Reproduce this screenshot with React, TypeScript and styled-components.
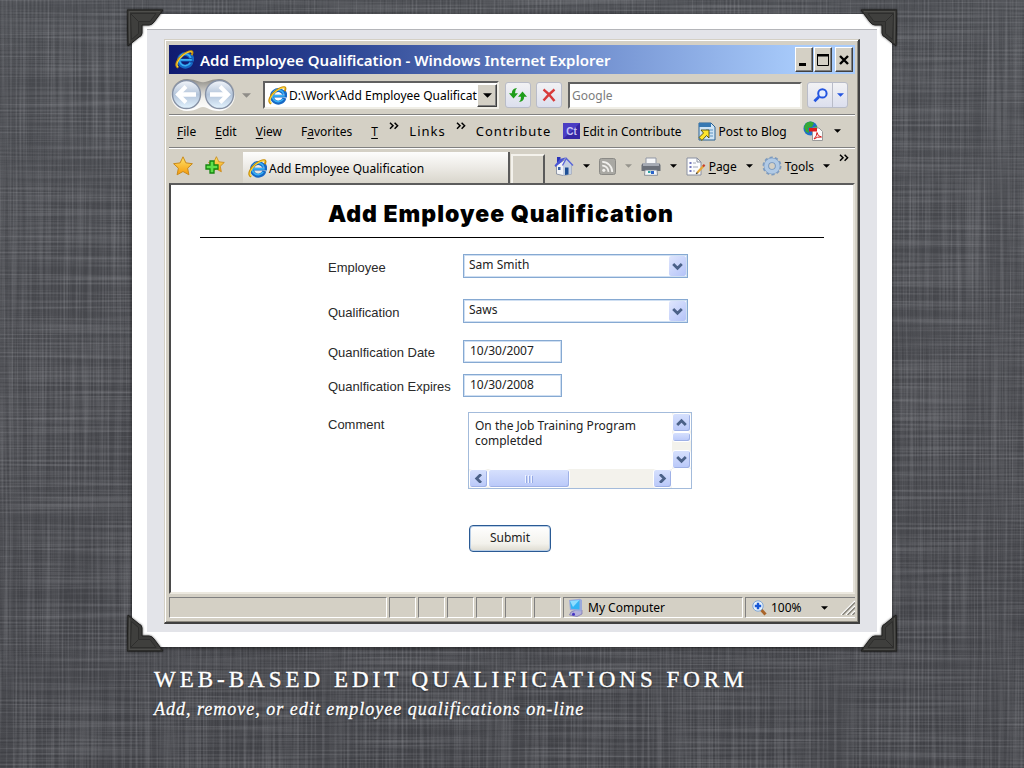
import React from 'react';
import styled, { createGlobalStyle, css } from 'styled-components';

const UI = '"Noto Sans", "Open Sans", sans-serif';
const FACE = '#d4d0c5';

const GlobalStyle = createGlobalStyle`
  * { box-sizing: border-box; }
  body { margin: 0; background: #494a4f; font-family: ${UI}; font-size: 12px; color: #000; }
  button, input, select, textarea { font: inherit; color: inherit; margin: 0; border-radius: 0; outline: 0; }
  button { cursor: pointer; padding: 0; }
  svg { display: block; flex: none; }
`;

const sunken = css`
  border: 1px solid;
  border-color: #808080 #fff #fff #808080;
`;
const raised = css`
  border: 1px solid;
  border-color: #fff #404040 #404040 #fff;
  box-shadow: inset -1px -1px 0 #808080;
`;

/* ---------- Slide ---------- */

const Slide = styled.main`
  position: relative;
  min-height: 100vh;
  padding: 14px 132px 40px;
  isolation: isolate;
  overflow: hidden;
`;
const Linen = styled.svg`
  position: absolute;
  inset: 0;
  z-index: -1;
  width: 100%;
  height: 100%;
`;
const Frame = styled.figure`
  position: relative;
  margin: 0;
  padding: 15px;
  background: #fff;
  box-shadow: 0 1px 4px rgba(0, 0, 0, 0.6);
`;
const Mat = styled.div`
  padding: 9px 17px 8px;
  background: #e3e4e9;
  border-top: 1px solid #b4b5b9;
`;
const Corner = styled.svg<{ $v: 'top' | 'bottom'; $h: 'left' | 'right' }>`
  position: absolute;
  ${p => p.$v}: -5px;
  ${p => p.$h}: -5px;
  transform: scale(${p => (p.$h === 'left' ? 1 : -1)}, ${p => (p.$v === 'top' ? 1 : -1)});
  filter: drop-shadow(0 0 1px rgba(0, 0, 0, 0.7));
`;
const Caption = styled.section`
  padding: 19px 22px 0;
  font-family: "Liberation Serif", serif;
  color: #fff;
  text-shadow: 0 1px 2px rgba(0, 0, 0, 0.6);
`;
const CaptionTitle = styled.h1`
  margin: 0;
  font-size: 23px;
  line-height: 28px;
  font-weight: 400;
  letter-spacing: 4px;
  text-transform: uppercase;
  -webkit-text-stroke: 0.4px #fff;
`;
const CaptionText = styled.p`
  margin: 3px 0 0;
  font-size: 18px;
  line-height: 24px;
  font-style: italic;
  letter-spacing: 1px;
  -webkit-text-stroke: 0.3px #fff;
`;

/* ---------- Window chrome ---------- */

const Window = styled.div`
  padding: 5px 3px 4px 4px;
  background: ${FACE};
  border-style: solid;
  border-width: 1px 2px 2px 1px;
  border-color: #d4d0c5 #404040 #404040 #d4d0c5;
  box-shadow: inset 1px 1px 0 #fff, inset -1px -1px 0 #8c897f;
`;
const TitleBar = styled.header`
  display: flex;
  align-items: center;
  height: 29px;
  padding: 0 2px 0 6px;
  gap: 6px;
  color: #fff;
  background: linear-gradient(90deg, #0f1a70 0%, #2c4593 25%, #7391d0 62%, #a8cbfb 92%);
`;
const WindowTitle = styled.h2`
  flex: 1;
  margin: 0;
  font-size: 15px;
  line-height: 20px;
  font-weight: 600;
`;
const WindowButtons = styled.div`
  display: flex;
  gap: 1px;
`;
const WindowButton = styled.button<{ $apart?: boolean }>`
  display: grid;
  place-items: center;
  width: 18px;
  height: 25px;
  margin-left: ${p => (p.$apart ? 2 : 0)}px;
  background: ${FACE};
  ${raised}
`;
const Bar = styled.div<{ $h: number }>`
  display: flex;
  align-items: center;
  height: ${p => p.$h}px;
  border-bottom: 1px solid #808080;
  box-shadow: 0 1px 0 #fff;
`;
const AddressBar = styled(Bar)`
  padding: 2px 7px 0 1px;
`;
const Plain = styled.button`
  display: flex;
  align-items: center;
  gap: 3px;
  background: none;
  border: 0;
  white-space: nowrap;
`;
const HistoryButton = styled(Plain)`
  margin: 0 12px 0 6px;
`;
const Address = styled.div`
  display: flex;
  align-items: center;
  width: 236px;
  height: 28px;
  padding-left: 3px;
  margin-right: 6px;
  background: #fff;
  border: 2px solid;
  border-color: #606060 #f0eee6 #f0eee6 #606060;
`;
const AddressInput = styled.input`
  flex: 1;
  min-width: 0;
  height: 22px;
  padding: 0 0 0 2px;
  background: none;
  border: 0;
`;
const DropButton = styled.button`
  display: grid;
  place-items: center;
  width: 20px;
  height: 23px;
  background: ${FACE};
  ${raised}
`;
const SoftButton = styled.button`
  display: grid;
  place-items: center;
  width: 26px;
  height: 26px;
  margin-right: 5px;
  border: 1px solid #b9bcc8;
  border-radius: 3px;
  background: linear-gradient(#f2f2f4, #dcdfee);
`;
const SearchInput = styled.input`
  flex: 1;
  min-width: 0;
  height: 27px;
  padding: 0 2px;
  margin: 0 5px 0 1px;
  background: #fff;
  border: 2px solid;
  border-color: #606060 #f0eee6 #f0eee6 #606060;
  &::placeholder { color: #7c7c7c; opacity: 1; }
`;
const SearchButtons = styled.div`
  display: flex;
  height: 26px;
  border: 1px solid #b9bcc8;
  border-radius: 3px;
  background: linear-gradient(#f2f2f4, #dcdfee);
  button { display: grid; place-items: center; border: 0; background: none; }
  button:first-child { width: 25px; border-right: 1px solid #b9bcc8; }
  button:last-child { width: 14px; }
`;
const MenuBar = styled(Bar)`
  padding: 0 14px 0 8px;
  justify-content: space-between;
`;
const MenuGroup = styled.div<{ $gap: number }>`
  display: flex;
  align-items: center;
  gap: ${p => p.$gap}px;
`;
const Accel = styled.u`
  text-underline-offset: 2px;
`;
const BarLabel = styled.span`
  font-size: 13px;
  letter-spacing: 1px;
`;
const More = styled(Plain)`
  align-self: flex-start;
`;
const TabBar = styled.div`
  display: flex;
  align-items: flex-end;
  height: 35px;
  padding: 1px 6px 0 4px;
`;
const TabTools = styled.div`
  display: flex;
  align-items: center;
  align-self: center;
  gap: 12px;
  margin-right: 18px;
`;
const Tab = styled.button`
  display: flex;
  flex: 1;
  align-items: center;
  gap: 2px;
  height: 31px;
  padding: 2px 5px 0;
  background: linear-gradient(#fdfdfc, #eceae5 50%, #d9d6cc);
  border: 0;
  border-right: 2px solid #5a5a5a;
  white-space: nowrap;
`;
const NewTab = styled.button`
  width: 34px;
  height: 29px;
  margin-left: 1px;
  background: ${FACE};
  border: solid;
  border-width: 2px 2px 0 2px;
  border-color: #f4f2ec #5a5a5a #5a5a5a #f4f2ec;
`;
const Commands = styled.div`
  display: flex;
  align-items: center;
  align-self: stretch;
  gap: 9px;
  margin-left: 9px;
`;
const MoreCommands = styled(More)`
  padding-top: 5px;
`;

/* ---------- Page inside the browser ---------- */

const Page = styled.div`
  padding: 15px 29px 40px;
  background: #fff;
  border: solid;
  border-width: 2px 2px 2px 2px;
  border-color: #5c5c5c #e4e1d8 #ece9e0 #4a4a4a;
`;
const PageTitle = styled.h3`
  margin: 0;
  padding: 0 22px 8px 0;
  border-bottom: 1px solid #000;
  font: 900 23px/29px Inter, sans-serif;
  letter-spacing: 1px;
  text-align: center;
`;
const Form = styled.form`
  padding: 16px 0 0 128px;
`;
const Row = styled.div<{ $after: number; $top?: boolean }>`
  display: flex;
  align-items: ${p => (p.$top ? 'flex-start' : 'center')};
  margin-bottom: ${p => p.$after}px;
`;
const Label = styled.label`
  width: 135px;
  padding-top: 3px;
  font: 13px/20px "Liberation Sans", Arial, sans-serif;
  color: #2a2a2a;
`;
const fieldBorder = css`
  border: 1px solid #86a9d2;
  box-shadow: inset 0 0 0 1px #cfdff2;
`;
const SelectBox = styled.div`
  position: relative;
  width: 225px;
`;
const Select = styled.select`
  appearance: none;
  display: block;
  width: 100%;
  height: 24px;
  padding: 0 24px 3px 5px;
  background: #fff;
  color: #222;
  ${fieldBorder}
`;
const SelectArrow = styled.span`
  position: absolute;
  top: 2px;
  right: 2px;
  bottom: 2px;
  display: grid;
  place-items: center;
  width: 17px;
  border-radius: 2px;
  background: linear-gradient(135deg, #dfe6fd, #b4c3f8);
  pointer-events: none;
`;
const TextInput = styled.input`
  width: 99px;
  height: 23px;
  padding: 0 5px 2px 6px;
  background: #fff;
  color: #222;
  ${fieldBorder}
`;
const Indent = styled.div`
  padding-left: 5px;
`;
const CommentBox = styled.div`
  display: grid;
  grid-template: 56px 19px / 1fr 19px;
  width: 224px;
  background: #fff;
  border: 1px solid #a3bbdb;
`;
const CommentInput = styled.textarea`
  display: block;
  width: 100%;
  height: 100%;
  padding: 5px 6px 0;
  border: 0;
  resize: none;
  overflow: hidden;
  background: none;
  line-height: 15px;
  color: #222;
`;
const Track = styled.div<{ $vertical?: boolean }>`
  display: flex;
  flex-direction: ${p => (p.$vertical ? 'column' : 'row')};
  background: #f3f2ec;
`;
const scrollPart = css`
  display: grid;
  place-items: center;
  border: 1px solid #fff;
  border-radius: 3px;
  background: linear-gradient(#d6e0fd, #b9c8f9);
  box-shadow: inset -1px -1px 0 #9fb1e6;
`;
const ScrollButton = styled.button`
  width: 19px;
  height: 19px;
  flex: none;
  ${scrollPart}
`;
const ThumbX = styled.div`
  width: 82px;
  margin-right: auto;
  ${scrollPart}
`;
const ThumbY = styled.div`
  height: 10px;
  margin-bottom: auto;
  ${scrollPart}
`;
const Submit = styled.button`
  display: block;
  width: 82px;
  height: 27px;
  margin-left: 136px;
  padding-bottom: 2px;
  border: 1px solid #2a5a94;
  border-radius: 4px;
  background: linear-gradient(#fff, #f3f2ec 70%, #dedbd0);
  box-shadow: inset 0 0 0 1px #b9cee6;
  color: #222;
`;

/* ---------- Status bar ---------- */

const StatusBar = styled.footer`
  display: flex;
  gap: 2px;
  padding-top: 3px;
`;
const Cell = styled.div<{ $w?: number }>`
  display: flex;
  align-items: center;
  gap: 4px;
  height: 21px;
  padding-left: 4px;
  ${p => (p.$w ? `width: ${p.$w}px;` : 'flex: 1;')}
  ${sunken}
`;
const ZoomCell = styled(Cell)`
  padding-left: 6px;
  border-right: 0;
`;
const ZoomValue = styled.span`
  flex: 1;
`;
const ZoomMenu = styled(Plain)`
  margin-right: 8px;
`;

/* ---------- Icons ---------- */

const IE = ({ size = 20 }: { size?: number }) => (
  <svg width={size} height={size} viewBox="0 0 20 20" fill="none">
    <path d="M17.2 12.6A6.6 6.6 0 1 1 17 8.6" stroke="#1668c4" strokeWidth="4.2" />
    <path d="M5 10.6H18.8Q19 7 17 5.4" stroke="#1668c4" strokeWidth="2.8" />
    <path d="M16 13.6A6.2 6.2 0 1 1 16.6 8.4M5.6 10.4H17.6" stroke="#39b0f4" strokeWidth="1.8" />
    <path d="M3.4 18.6C-1.2 17 2.4 9.4 8.6 4.8 13 1.6 17.8 0 18.4 2.4 18.6 3.4 18 4.6 17.4 5.4" stroke="#c98f08" strokeWidth="2" />
    <path d="M3.6 18C0 16.4 3.4 9.6 9 5.2 13 2.2 17.2 0.8 17.9 2.6" stroke="#ffd93a" strokeWidth="1.1" />
  </svg>
);

const Caret = ({ color = '#000', w = 7 }: { color?: string; w?: number }) => (
  <svg width={w} height={(w + 1) / 2} viewBox="0 0 8 4"><path d="M0 0H8L4 4Z" fill={color} /></svg>
);

const Chevrons = () => (
  <svg width="10" height="8" viewBox="0 0 10 8" fill="none" stroke="#000" strokeWidth="1.5">
    <path d="M1 .8 4 3.8 1 6.8M5.6 .8 8.6 3.8 5.6 6.8" />
  </svg>
);

const Angle = ({ turn = 0 }: { turn?: number }) => (
  <svg width="11" height="9" viewBox="0 0 11 9" fill="none" stroke="#4b6188" strokeWidth="2.8">
    <path d="M1.2 2 5.5 6.3 9.8 2" transform={`rotate(${turn} 5.5 4.5)`} />
  </svg>
);

const NavButtons = () => (
  <svg width="66" height="36" viewBox="0 0 66 36">
    <defs>
      <linearGradient id="orb" x1="0" y1="0" x2="0" y2="1">
        <stop offset="0" stopColor="#f3f6fa" /><stop offset=".5" stopColor="#b3c4da" /><stop offset="1" stopColor="#e4f4ff" />
      </linearGradient>
      <linearGradient id="rim" x1="0" y1="0" x2="0" y2="1">
        <stop offset="0" stopColor="#8d8b85" /><stop offset=".6" stopColor="#f2f1ed" /><stop offset="1" stopColor="#fff" />
      </linearGradient>
    </defs>
    <path d="M17 2Q24 2 29 4.5 33 6 37 4.5 42 2 49 2A16 16 0 0 1 49 34Q42 34 37 31 33 29 29 31 24 34 17 34A16 16 0 0 1 17 2Z" fill="url(#rim)" />
    <circle cx="16.5" cy="17.5" r="14" fill="url(#orb)" stroke="#8792a5" strokeWidth="1.4" />
    <circle cx="49.5" cy="17.5" r="14" fill="url(#orb)" stroke="#8792a5" strokeWidth="1.4" />
    <path d="M16 9.500 8 17.500 16 25.500" fill="none" stroke="#fff" strokeWidth="4" />
    <path d="M9 17.500H26M57 17.500H40" stroke="#fff" strokeWidth="4.500" />
    <path d="M50 9.500 58 17.500 50 25.500" fill="none" stroke="#fff" strokeWidth="4" />
  </svg>
);

const Refresh = () => (
  <svg width="18" height="18" viewBox="0 0 18 18" fill="#1f9d1a">
    <path d="M4.5 12.6 0 7.2H2.8Q3 2.4 8 2 5.8 4 6 7.2H9Z" />
    <path d="M13.5 5.4 18 10.8H15.2Q15 15.6 10 16 12.2 14 12 10.8H9Z" />
  </svg>
);

const Stop = () => (
  <svg width="14" height="14" viewBox="0 0 14 14" fill="none" stroke="#d83a3a" strokeWidth="2.4">
    <path d="M1.5 1.5Q7 5.5 12.5 13M12.5 1.5Q6.5 6.5 1.5 12.5" />
  </svg>
);

const Magnifier = () => (
  <svg width="15" height="15" viewBox="0 0 15 15" fill="none" stroke="#2455e0">
    <circle cx="9.4" cy="5.4" r="4.2" strokeWidth="2" fill="#e6eefe" />
    <path d="M6 8.8 1.4 13.2" strokeWidth="2.8" />
  </svg>
);

const STAR = 'M10 .8 12.9 6.9 19.4 7.7 14.6 12.2 15.9 18.8 10 15.5 4.1 18.8 5.4 12.2 .6 7.7 7.1 6.9Z';
const Star = () => (
  <svg width="20" height="20" viewBox="0 0 20 20">
    <defs><linearGradient id="gold" x1="0" y1="0" x2="0" y2="1"><stop offset="0" stopColor="#ffe46a" /><stop offset="1" stopColor="#f59a0c" /></linearGradient></defs>
    <path d={STAR} fill="url(#gold)" stroke="#c98a1c" />
  </svg>
);
const AddStar = () => (
  <svg width="20" height="20" viewBox="0 0 20 20">
    <path d={STAR} transform="translate(3 0) scale(.84)" fill="url(#gold)" stroke="#c98a1c" />
    <path d="M5 5H9V9H13V13H9V17H5V13H1V9H5Z" fill="#5fe04a" stroke="#15850f" strokeWidth="1.300" />
  </svg>
);

const ContributeIcon = () => (
  <svg width="17" height="16" viewBox="0 0 17 16">
    <rect width="17" height="16" fill="#3626a4" /><path d="M0 0H17L0 16Z" fill="#4b3dc4" />
    <text x="8.5" y="11.5" textAnchor="middle" fontFamily="Liberation Sans, sans-serif" fontSize="10" fontWeight="700" fill="#c6c2f6">Ct</text>
  </svg>
);

const BlogIcon = () => (
  <svg width="18" height="19" viewBox="0 0 18 19">
    <path d="M1 1H13L17 5V18H1Z" fill="#cfe4f5" stroke="#2a6294" /><path d="M1 1H13V5H1Z" fill="#3678b2" />
    <path d="M8 8H15M11 11H15M12 14H15" stroke="#5c93c1" />
    <path d="M11 8V16L8.500 13.500 4 18.400 1 15.500 5.500 11 3 8Z" fill="#ffe52c" stroke="#4f4a10" strokeWidth=".9" />
  </svg>
);

const GlobePdf = () => (
  <svg width="20" height="20" viewBox="0 0 20 20">
    <circle cx="7.500" cy="7.500" r="7" fill="#1f6fca" /><path d="M3 2Q8-1 11 2L9 6 5 7 6 12 3 11 1 6ZM11 6 14 5 14 9 11 10Z" fill="#35a936" />
    <path d="M9.500 7H16L19.500 10.500V19.500H9.500Z" fill="#fbfbfb" stroke="#9a9a9a" />
    <path d="M6 7H14V10.500H6Z" fill="#e01b1b" />
    <path d="M11 18Q14 15 14 11.500 14.500 15.500 18.500 16 14 15.500 11 18Z" fill="none" stroke="#d81f1f" />
  </svg>
);

const Home = () => (
  <svg width="20" height="20" viewBox="0 0 20 20">
    <path d="M3 1H6.500V7L3 9Z" fill="#2b33b8" />
    <path d="M2.500 9V18L9 19.500 17.500 18V8L12 3Z" fill="#f2f4f8" stroke="#7d879a" strokeWidth=".8" />
    <path d="M9 9.500V19.500L17.500 18V8L12.500 3Z" fill="#c5d0e2" />
    <path d="M.5 9.500 6 3 12 1.200 7.500 6 1.500 11Z" fill="#4a56d4" />
    <path d="M8.500 9.500 12.300 2.500 19 9.500" fill="none" stroke="#5a66d8" strokeWidth="1.400" />
    <path d="M4 11H6.500V14H4Z" fill="#395fa8" /><path d="M11 11.500H14.500V18.400L11 19Z" fill="#1e4f95" />
  </svg>
);

const Feed = () => (
  <svg width="17" height="17" viewBox="0 0 17 17" fill="none">
    <rect x=".5" y=".5" width="16" height="16" rx="2" fill="#a9a8a3" stroke="#8b8a86" />
    <circle cx="4.800" cy="12.300" r="1.600" fill="#f1f0ed" />
    <path d="M3.200 7.600A6 6 0 0 1 9.400 13.900M3.200 3.900A9.800 9.800 0 0 1 13.200 13.900" stroke="#f1f0ed" strokeWidth="1.800" />
  </svg>
);

const Printer = () => (
  <svg width="20" height="19" viewBox="0 0 20 19">
    <path d="M5 1H15V8H5Z" fill="#f6f7f9" stroke="#9197a3" />
    <path d="M2 6H18L19.500 8V14H.5V8Z" fill="#6b7079" /><path d="M2 6H18V9H2Z" fill="#a6abb4" />
    <path d="M4 13H16L16.500 18.300H3.500Z" fill="#f3f6f9" stroke="#777d88" strokeWidth=".8" />
    <path d="M7 14H9.500V16H7Z" fill="#2aa5a0" /><path d="M10 14H13V17H10Z" fill="#2b63c9" />
  </svg>
);

const PageIcon = () => (
  <svg width="20" height="19" viewBox="0 0 20 19">
    <path d="M1 1H11L15 5V18H1Z" fill="#fbfcfe" stroke="#8a90a0" /><path d="M11 1V5H15" fill="none" stroke="#8a90a0" />
    <path d="M3.500 6H5.500M3.500 10H5.500M3.500 14H5.500" stroke="#7377bd" strokeWidth="1.800" /><path d="M7 6H10M7 10H12M7 14H9" stroke="#a4a8b8" />
    <path d="M11 16 17.500 9" stroke="#e5a83a" strokeWidth="2.200" /><path d="M17 9.500 18.600 7.800" stroke="#c8402f" strokeWidth="2.200" /><path d="M10.200 16.900 11.400 15.600" stroke="#333" strokeWidth="1.400" />
  </svg>
);

const Gear = () => (
  <svg width="20" height="20" viewBox="0 0 20 20" fill="none">
    <circle cx="10" cy="10" r="7.800" stroke="#7f9cbf" strokeWidth="3.400" strokeDasharray="2.900 2" />
    <circle cx="10" cy="10" r="5.600" stroke="#7594ba" strokeWidth="5.400" /><circle cx="10" cy="10" r="5.800" stroke="#b1cae5" strokeWidth="4" />
  </svg>
);

const Computer = () => (
  <svg width="16" height="19" viewBox="0 0 16 19">
    <path d="M8 12H14L14 16 9 18.500 1.500 17 3 14Z" fill="#b4b1dc" stroke="#7370ac" strokeWidth=".7" />
    <path d="M1 2 12 .8 14 2V12L12.500 13.500 2 12Z" fill="#9ba8da" /><path d="M2 3 11.500 2V11.500L3 10.800Z" fill="#32b4f5" /><path d="M2 3 11.500 2 5 9Z" fill="#8fdcff" />
    <circle cx="5.500" cy="16.200" r="1.500" fill="#4534c4" />
  </svg>
);

const ZoomIcon = () => (
  <svg width="15" height="16" viewBox="0 0 15 16" fill="none">
    <path d="M9 9.500 13.500 14.500" stroke="#a8642a" strokeWidth="3" />
    <circle cx="6" cy="6" r="5.200" fill="#e8f3fd" stroke="#7fa6d6" />
    <path d="M6 2.800V9.200M2.800 6H9.200" stroke="#1757d6" strokeWidth="2.400" />
  </svg>
);

const Grip = () => (
  <svg width="15" height="15" viewBox="0 0 15 15" fill="none">
    <path d="M1 15 15 1M6 15 15 6M11 15 15 11" stroke="#fff" strokeWidth="1.400" />
    <path d="M2.500 15 15 2.500M7.500 15 15 7.500M12.500 15 15 12.500" stroke="#85827a" strokeWidth="1.400" />
  </svg>
);

const PhotoCorner = ({ v, h }: { v: 'top' | 'bottom'; h: 'left' | 'right' }) => (
  <Corner $v={v} $h={h} width="37" height="38" viewBox="0 0 37 38">
    <path d="M0 1H36L27 13Q25 16 22 16H15V24Q15 27 12 28L1 37Z" fill="#3a3a38" stroke="#20201f" />
    <path d="M3.500 4.500H29L23 12.500H11.500V24.500L4.500 30.500Z" fill="#3f3f3d" stroke="#2b2b2a" strokeWidth=".8" />
    <path d="M2 2.600H33M2.400 3V34" stroke="#575754" strokeWidth=".8" />
    <path d="M4 5 11 12" stroke="#2e2e2d" />
  </Corner>
);

/* Woven cloth: one noise layer per thread direction, plus sparse bright threads. */
const THREAD = '0 0 0 0 .72  0 0 0 0 .73  0 0 0 0 .77';
const Texture = () => (
  <Linen aria-hidden="true">
    <defs>
      <filter id="weft" x="0" y="0" width="100%" height="100%">
        <feTurbulence type="fractalNoise" baseFrequency="0.006 0.5" numOctaves="2" seed="4" />
        <feColorMatrix values={`${THREAD}  1.600 0 0 0 -.6`} />
      </filter>
      <filter id="warp" x="0" y="0" width="100%" height="100%">
        <feTurbulence type="fractalNoise" baseFrequency="0.5 0.006" numOctaves="2" seed="9" />
        <feColorMatrix values={`${THREAD}  1.600 0 0 0 -.6`} />
      </filter>
      <linearGradient id="shade" x1="0" y1="0" x2="0" y2="1">
        <stop offset="0" stopColor="#484a4f" /><stop offset=".5" stopColor="#45464b" /><stop offset="1" stopColor="#404146" />
      </linearGradient>
    </defs>
    <rect width="100%" height="100%" fill="url(#shade)" />
    <rect width="100%" height="100%" filter="url(#weft)" opacity=".24" />
    <rect width="100%" height="100%" filter="url(#warp)" opacity=".24" />
  </Linen>
);

/* ---------- Screen ---------- */

export default function App() {
  return (
    <Slide>
      <GlobalStyle />
      <Texture />
      <Frame>
        <Mat>
          <Window>
            <TitleBar>
              <IE size={19} />
              <WindowTitle>Add Employee Qualification - Windows Internet Explorer</WindowTitle>
              <WindowButtons>
                <WindowButton aria-label="Minimize"><svg width="10" height="12"><path d="M0 9H7V12H0Z" /></svg></WindowButton>
                <WindowButton aria-label="Maximize"><svg width="12" height="12"><path d="M.5 1.500H11.500V11.500H.5Z" fill="none" stroke="#000" /><path d="M0 0H12V2.500H0Z" /></svg></WindowButton>
                <WindowButton aria-label="Close" $apart><svg width="10" height="10"><path d="M1 1 9 9M9 1 1 9" stroke="#000" strokeWidth="2.400" /></svg></WindowButton>
              </WindowButtons>
            </TitleBar>

            <AddressBar $h={41}>
              <Plain aria-label="Back and forward"><NavButtons /></Plain>
              <HistoryButton aria-label="Recent pages"><Caret color="#8f8d88" w={9} /></HistoryButton>
              <Address>
                <IE size={19} />
                <AddressInput aria-label="Address" defaultValue="D:\Work\Add Employee Qualification" />
                <DropButton aria-label="Show address list"><Caret w={9} /></DropButton>
              </Address>
              <SoftButton aria-label="Refresh"><Refresh /></SoftButton>
              <SoftButton aria-label="Stop"><Stop /></SoftButton>
              <SearchInput aria-label="Search" placeholder="Google" />
              <SearchButtons>
                <button aria-label="Search"><Magnifier /></button>
                <button aria-label="Search options"><Caret color="#2455e0" /></button>
              </SearchButtons>
            </AddressBar>

            <MenuBar $h={33}>
              <MenuGroup $gap={19}>
                <Plain><span><Accel>F</Accel>ile</span></Plain>
                <Plain><span><Accel>E</Accel>dit</span></Plain>
                <Plain><span><Accel>V</Accel>iew</span></Plain>
                <Plain><span>F<Accel>a</Accel>vorites</span></Plain>
                <Plain><Accel>T</Accel></Plain>
              </MenuGroup>
              <MenuGroup $gap={10}>
                <More aria-label="More menus"><Chevrons /></More>
                <BarLabel>Links</BarLabel>
                <More aria-label="More links"><Chevrons /></More>
                <BarLabel>Contribute</BarLabel>
              </MenuGroup>
              <MenuGroup $gap={16}>
                <Plain><ContributeIcon />Edit in Contribute</Plain>
                <Plain><BlogIcon />Post to Blog</Plain>
                <Plain aria-label="Convert to PDF"><GlobePdf /></Plain>
              </MenuGroup>
              <Plain aria-label="PDF options"><Caret /></Plain>
            </MenuBar>

            <TabBar>
              <TabTools>
                <Plain aria-label="Favorites center"><Star /></Plain>
                <Plain aria-label="Add to favorites"><AddStar /></Plain>
              </TabTools>
              <Tab><IE size={19} />Add Employee Qualification</Tab>
              <NewTab aria-label="New tab" />
              <Commands>
                <Plain aria-label="Home"><Home /></Plain>
                <Plain aria-label="Home options"><Caret /></Plain>
                <Plain aria-label="Feeds"><Feed /></Plain>
                <Plain aria-label="Feed options"><Caret color="#96948d" /></Plain>
                <Plain aria-label="Print"><Printer /></Plain>
                <Plain aria-label="Print options"><Caret /></Plain>
                <Plain><PageIcon /><span><Accel>P</Accel>age</span></Plain>
                <Plain aria-label="Page options"><Caret /></Plain>
                <Plain><Gear /><span>T<Accel>o</Accel>ols</span></Plain>
                <Plain aria-label="Tools options"><Caret /></Plain>
                <MoreCommands aria-label="More commands"><Chevrons /></MoreCommands>
              </Commands>
            </TabBar>

            <Page>
              <PageTitle>Add Employee Qualification</PageTitle>
              <Form onSubmit={e => e.preventDefault()}>
                <Row $after={21}>
                  <Label htmlFor="employee">Employee</Label>
                  <SelectBox>
                    <Select id="employee"><option>Sam Smith</option></Select>
                    <SelectArrow><Angle /></SelectArrow>
                  </SelectBox>
                </Row>
                <Row $after={17}>
                  <Label htmlFor="qualification">Qualification</Label>
                  <SelectBox>
                    <Select id="qualification"><option>Saws</option></Select>
                    <SelectArrow><Angle /></SelectArrow>
                  </SelectBox>
                </Row>
                <Row $after={11}>
                  <Label htmlFor="date">Quanlfication Date</Label>
                  <TextInput id="date" defaultValue="10/30/2007" />
                </Row>
                <Row $after={15}>
                  <Label htmlFor="expires">Quanlfication Expires</Label>
                  <TextInput id="expires" defaultValue="10/30/2008" />
                </Row>
                <Row $after={36} $top>
                  <Label htmlFor="comment">Comment</Label>
                  <Indent>
                    <CommentBox>
                      <CommentInput id="comment" defaultValue={'On the Job Training Program\ncompletded'} />
                      <Track $vertical>
                        <ScrollButton type="button" aria-label="Scroll up"><Angle turn={180} /></ScrollButton>
                        <ThumbY />
                        <ScrollButton type="button" aria-label="Scroll down"><Angle /></ScrollButton>
                      </Track>
                      <Track>
                        <ScrollButton type="button" aria-label="Scroll left"><Angle turn={90} /></ScrollButton>
                        <ThumbX><svg width="9" height="8"><path d="M.5 0V8M3.500 0V8M6.500 0V8" stroke="#eef3ff" /><path d="M1.500 1V8M4.500 1V8M7.500 1V8" stroke="#96aae4" /></svg></ThumbX>
                        <ScrollButton type="button" aria-label="Scroll right"><Angle turn={-90} /></ScrollButton>
                      </Track>
                    </CommentBox>
                  </Indent>
                </Row>
                <Indent><Submit type="submit">Submit</Submit></Indent>
              </Form>
            </Page>

            <StatusBar>
              <Cell />
              {[1, 2, 3, 4, 5, 6].map(n => <Cell key={n} $w={27} />)}
              <Cell $w={180}><Computer />My Computer</Cell>
              <ZoomCell $w={110}>
                <ZoomIcon />
                <ZoomValue>100%</ZoomValue>
                <ZoomMenu aria-label="Zoom level"><Caret /></ZoomMenu>
                <Grip />
              </ZoomCell>
            </StatusBar>
          </Window>
        </Mat>
        <PhotoCorner v="top" h="left" />
        <PhotoCorner v="top" h="right" />
        <PhotoCorner v="bottom" h="left" />
        <PhotoCorner v="bottom" h="right" />
      </Frame>
      <Caption>
        <CaptionTitle>Web-Based Edit Qualifications Form</CaptionTitle>
        <CaptionText>Add, remove, or edit employee qualifications on-line</CaptionText>
      </Caption>
    </Slide>
  );
}
